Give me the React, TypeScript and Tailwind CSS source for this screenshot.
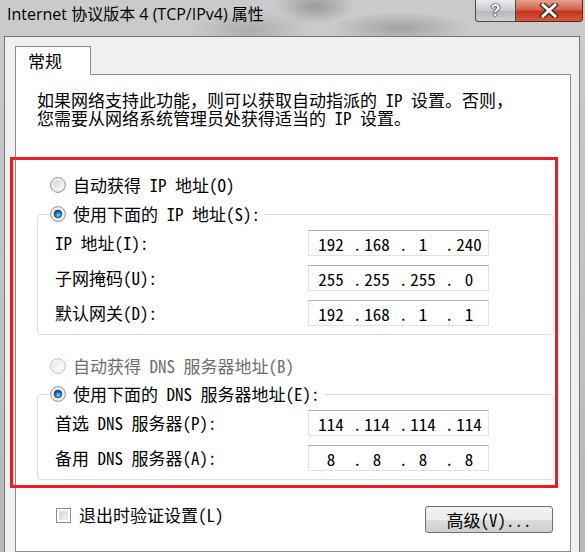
import { Fragment, useId } from 'react';

// Windows 7 style "Internet 协议版本 4 (TCP/IPv4) 属性" dialog

const sim = "font-['Noto_Sans_Mono_CJK_SC','Noto_Sans_CJK_SC','DejaVu_Sans_Mono',monospace]";

const intro = '如果网络支持此功能，则可以获取自动指派的 IP 设置。否则，\n您需要从网络系统管理员处获得适当的 IP 设置。';

function Radio({ checked, disabled }: { checked?: boolean; disabled?: boolean }) {
  const id = useId().replace(/:/g, '');
  return (
    <svg width="16" height="16" viewBox="0 0 16 16" className="shrink-0">
      <defs>
        <linearGradient id={`in${id}`} x1="0" y1="0" x2="1" y2="1">
          <stop offset="0" stopColor={disabled ? '#e6e6e6' : '#cfcfcf'} />
          <stop offset="1" stopColor="#ffffff" />
        </linearGradient>
        <radialGradient id={`dot${id}`} cx="0.55" cy="0.65" r="0.6">
          <stop offset="0" stopColor="#9fdcff" />
          <stop offset="0.45" stopColor="#2a8ad8" />
          <stop offset="1" stopColor="#0b3c7a" />
        </radialGradient>
      </defs>
      <circle cx="8" cy="8" r="7.4" fill="#f4f4f4" stroke={disabled ? '#c4c4c4' : '#8e8f8f'} strokeWidth="1" />
      <circle cx="8" cy="8" r="5.2" fill={`url(#in${id})`} />
      {checked && <circle cx="8" cy="8" r="3.9" fill={`url(#dot${id})`} stroke="#1c4e86" strokeWidth="0.6" />}
    </svg>
  );
}

function IpBox({ parts }: { parts: string[] }) {
  return (
    <div className={`w-[181px] h-[26px] flex items-center bg-white border border-[#dfe3e8] border-t-[#abadb3] pl-[3px] text-[17px] leading-none text-black ${sim}`}>
      {parts.map((p, i) => (
        <Fragment key={i}>
          {i > 0 && <span className="w-[8px] pl-[3px] overflow-visible whitespace-nowrap">.</span>}
          <span className="w-[38px] text-center">{p}</span>
        </Fragment>
      ))}
    </div>
  );
}

function Row({ label, parts }: { label: string; parts: string[] }) {
  return (
    <div className="h-[26px] flex items-center justify-between">
      <span className="whitespace-pre">{label}</span>
      <IpBox parts={parts} />
    </div>
  );
}

function Group({ legend, rows }: { legend: string; rows: { label: string; parts: string[] }[] }) {
  return (
    <fieldset className="ml-[21px] mr-[16px] border border-[#d5dfe5] rounded-[4px] p-0">
      <legend className="ml-[11px] pl-[1px] pr-[4px] h-[22px] flex items-center gap-[7px] whitespace-pre">
        <Radio checked />
        <span>{legend}</span>
      </legend>
      <div className="pl-[17px] pr-[64px] pt-[5px] pb-[8px] flex flex-col gap-[9px]">
        {rows.map((r) => (
          <Row key={r.label} label={r.label} parts={r.parts} />
        ))}
      </div>
    </fieldset>
  );
}

export default function App() {
  return (
    <div className="relative w-[585px] h-[552px] overflow-hidden flex flex-col bg-[radial-gradient(ellipse_40px_18px_at_315px_6px,#9a9a9a,transparent),radial-gradient(ellipse_70px_16px_at_400px_28px,#a2a2a2,transparent),radial-gradient(ellipse_60px_20px_at_250px_30px,#acacac,transparent),linear-gradient(180deg,#cbcbcb,#b9b9b9)]">
      {/* Title bar */}
      <div className="h-[36px] shrink-0 flex items-start justify-between">
        <div className="pl-[7px] pt-[4px] text-[16px] leading-[20px] text-black font-['Open_Sans','Noto_Sans_CJK_SC',sans-serif] whitespace-pre">
          Internet 协议版本 4 (TCP/IPv4) 属性
        </div>
        <div className="flex mr-[2px]">
          <div className="w-[41px] h-[22px] rounded-bl-[4px] border border-t-0 border-[#4a4a4a] bg-[linear-gradient(180deg,#e9eaec,#c8cacd_50%,#b4b7ba_51%,#cfd2d4)] flex items-center justify-center text-[16px] font-bold text-white font-['Liberation_Sans',sans-serif] [text-shadow:0_0_2px_#222,0_0_1px_#222,0_0_1px_#222]">
            ?
          </div>
          <div className="w-[67px] h-[22px] rounded-br-[4px] border border-l-0 border-t-0 border-[#4a2a24] bg-[linear-gradient(180deg,#e8a08e,#d2644c_45%,#c3351d_55%,#d8593c)] flex items-center justify-center">
            <svg width="20" height="15" viewBox="0 0 20 15">
              <path d="M4 2 L16 13 M16 2 L4 13" stroke="#3a2420" strokeWidth="5.4" strokeLinecap="square" />
              <path d="M4 2 L16 13 M16 2 L4 13" stroke="#ffffff" strokeWidth="3" strokeLinecap="square" />
            </svg>
          </div>
        </div>
      </div>

      {/* Client area */}
      <div className="flex-1 ml-[4px] mr-[5px] bg-[#f0f0f0] border-t border-l border-r border-[#767676] pt-[9px] pl-[10px] pr-[8px] flex flex-col">
        <div className="relative z-10 w-[76px] h-[29px] -mb-px bg-white border border-b-0 border-[#898c95] pl-[12px] pt-[2px] text-[17px] leading-[24px] text-black font-['Noto_Sans_CJK_SC',sans-serif]">
          常规
        </div>
        <div className={`flex-1 bg-white border border-[#898c95] text-[17px] leading-[22px] text-black ${sim}`}>
          <p className="pl-[21px] pt-[16px] leading-[18px] whitespace-pre">{intro}</p>

          <div className="mt-[47px] pl-[34px] h-[22px] flex items-center gap-[7px] whitespace-pre">
            <Radio />
            <span>自动获得 IP 地址(O)</span>
          </div>

          <div className="mt-[7px]">
            <Group
              legend="使用下面的 IP 地址(S):"
              rows={[
                { label: 'IP 地址(I):', parts: ['192', '168', '1', '240'] },
                { label: '子网掩码(U):', parts: ['255', '255', '255', '0'] },
                { label: '默认网关(D):', parts: ['192', '168', '1', '1'] },
              ]}
            />
          </div>

          <div className="mt-[20px] pl-[34px] h-[22px] flex items-center gap-[7px] whitespace-pre text-[#6d6d6d]">
            <Radio disabled />
            <span>自动获得 DNS 服务器地址(B)</span>
          </div>

          <div className="mt-[6px]">
            <Group
              legend="使用下面的 DNS 服务器地址(E):"
              rows={[
                { label: '首选 DNS 服务器(P):', parts: ['114', '114', '114', '114'] },
                { label: '备用 DNS 服务器(A):', parts: ['8', '8', '8', '8'] },
              ]}
            />
          </div>

          <div className="mt-[24px] pl-[40px] mr-[17px] flex items-start justify-between">
            <div className="h-[22px] flex items-center gap-[8px] whitespace-pre">
              <span className="w-[15px] h-[15px] border border-[#8e8f8f] bg-white p-[2px]">
                <span className="block w-full h-full bg-[linear-gradient(135deg,#cfcfcf,#f6f6f6)] border border-[#e2e2e2]" />
              </span>
              <span>退出时验证设置(L)</span>
            </div>
            <div className="mt-[2px] w-[128px] h-[27px] rounded-[3px] border border-[#707070] bg-[linear-gradient(180deg,#f2f2f2,#ebebeb_50%,#dddddd_51%,#cfcfcf)] flex items-center justify-center whitespace-pre">
              高级(V)...
            </div>
          </div>
        </div>
      </div>

      {/* Red annotation box */}
      <div className="absolute left-[10px] top-[157px] w-[548px] h-[331px] border-[3px] border-[#ed1c24] pointer-events-none" />
    </div>
  );
}
